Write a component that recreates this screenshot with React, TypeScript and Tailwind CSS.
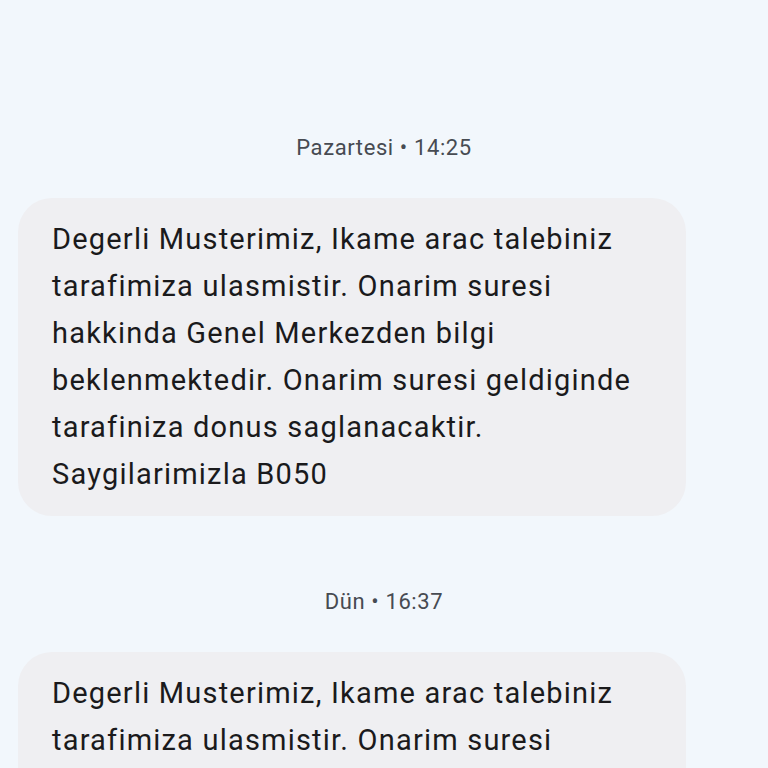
import React from "react";

const lines = [
  "Degerli Musterimiz, Ikame arac talebiniz",
  "tarafimiza ulasmistir. Onarim suresi",
  "hakkinda Genel Merkezden bilgi",
  "beklenmektedir. Onarim suresi geldiginde",
  "tarafiniza donus saglanacaktir.",
  "Saygilarimizla B050",
];

function Bubble() {
  return (
    <div className="ml-[18px] w-[668px] rounded-[34px] bg-[#efeff2] pl-[34px] pr-[20px] py-[18px] text-[29px] leading-[47px] tracking-[1.2px] text-[#1a1a1c]">
      {lines.map((l, i) => (
        <div key={i} className="whitespace-nowrap">{l}</div>
      ))}
    </div>
  );
}

function Label({ text }: { text: string }) {
  return (
    <div className="text-center text-[22px] leading-[28px] tracking-[0.6px] text-[#474b52]">{text}</div>
  );
}

export default function App() {
  return (
    <div
      className="w-[768px] h-[768px] overflow-hidden bg-[#f2f7fc] pt-[134px]"
      style={{ fontFamily: "Roboto, 'Noto Sans', sans-serif" }}
    >
      <Label text="Pazartesi • 14:25" />
      <div className="mt-[36px]">
        <Bubble />
      </div>
      <div className="mt-[72px]">
        <Label text="Dün • 16:37" />
      </div>
      <div className="mt-[36px]">
        <Bubble />
      </div>
    </div>
  );
}
